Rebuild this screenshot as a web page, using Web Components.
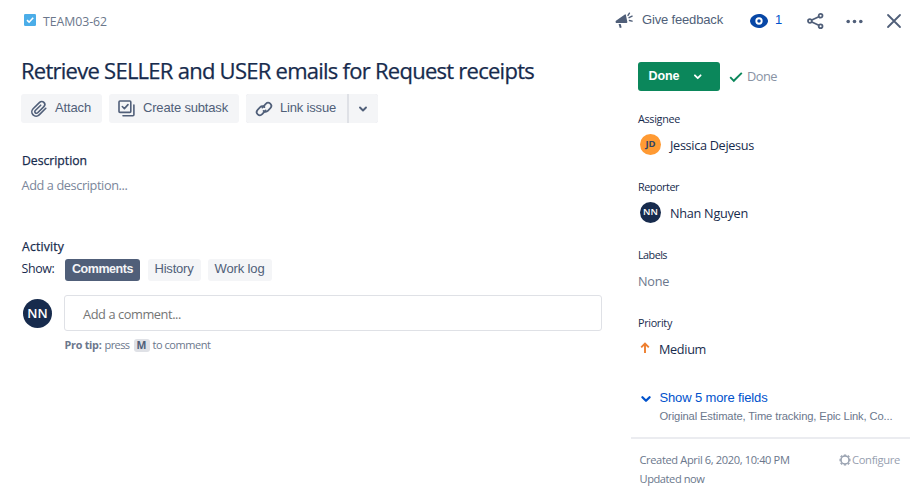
<!DOCTYPE html>
<html lang="en"><head><meta charset="utf-8"><title>TEAM03-62</title>
<style>
html,body{margin:0;background:#fff;overflow:hidden}
body{width:915px;height:500px}
</style></head><body>
<issue-page></issue-page>
<script>
function define(name, markup, setup){
  const t=document.createElement('template'); t.innerHTML=markup;
  customElements.define(name, class extends HTMLElement{
    connectedCallback(){
      if(this.shadowRoot) return;
      this.attachShadow({mode:'open'}).appendChild(t.content.cloneNode(true));
      if(setup) setup(this,this.shadowRoot);
    }
  });
}

/* Single line of text; "w" is the measure it is tracked to. */
define('ui-text',`<style>
:host{display:block;white-space:nowrap;flex:none;color:#172b4d;font-family:"Open Sans","Noto Sans",sans-serif;line-height:20px;height:20px}
:host([arial]){font-family:"Liberation Sans",Arial,sans-serif}
:host([bold]){font-weight:600}
:host([arial][bold]){font-weight:700}
:host([medium]){-webkit-text-stroke:.25px currentColor}
span{display:inline-block}
</style><span><slot></slot></span>`,(el,root)=>{
  const s=root.querySelector('span');
  el.style.fontSize=(el.getAttribute('size')||13)+'px';
  if(el.hasAttribute('color')) el.style.color=el.getAttribute('color');
  if(el.hasAttribute('weight')) el.style.fontWeight=el.getAttribute('weight');
  const w=+el.getAttribute('w');
  if(w){ s.style.letterSpacing=((w-s.getBoundingClientRect().width)/el.textContent.length)+'px'; el.style.width=w+'px'; }
});

const icons={
 task:['0 0 12 12','<rect width="12" height="12" rx="1.3" fill="#4bade8"/><path d="M3 6.2 5.1 8.2 9.2 3.8" fill="none" stroke="#fff" stroke-width="1.6"/>'],
 clip:['0 0 18 18','<path d="M15.8 8.3 9.2 14.9a4.3 4.3 0 0 1-6.1-6.1l6.5-6.4a3 3 0 0 1 4.3 4.2l-6.2 6.2a1.65 1.65 0 0 1-2.4-2.3l5.4-5.3" fill="none" stroke="currentColor" stroke-width="1.6" stroke-linecap="round"/>'],
 subtask:['0 0 17 17','<g fill="none" stroke="currentColor" stroke-width="1.6" stroke-linecap="round" stroke-linejoin="round"><rect x="1" y="1" width="11.8" height="11.4" rx="1"/><path d="M4.3 6.5 6.4 8.6 10 4.6M15.9 5v9.8q0 1-1 1H5"/></g>'],
 link:['0 0 18 18','<g fill="none" stroke="currentColor" stroke-width="1.7" stroke-linecap="round"><path d="M7.3 7.6 10.8 3.8a3.15 3.15 0 0 1 4.6 4.4l-2.6 2.7c-1.2 1.2-3.2 1.2-4.3 0"/><path d="M10.7 10.4 7.2 14.2a3.15 3.15 0 0 1-4.6-4.4L5.2 7.1c1.2-1.2 3.2-1.2 4.3 0"/></g>'],
 chevron:['0 0 10 10','<path d="M2 3.5 5 6.5 8 3.5" fill="none" stroke="currentColor" stroke-width="1.9" stroke-linecap="round" stroke-linejoin="round"/>'],
 horn:['0 0 20 18','<g fill="currentColor"><path d="M1 9.3 10.4 2.6Q11.3 2.2 11.5 3.2L13 10.6Q13 11.6 12 11.6L1.2 11.7Q-.2 10.6 1 9.3Z"/><path d="M3.8 12.6H6L7 16.2 5 16.8Z"/></g><path d="M13.7 3.6 15.2 1.2M14.8 6 18 4.4M15.2 8.9 18 9.6" stroke="currentColor" stroke-width="1.5" stroke-linecap="round"/>'],
 eye:['0 0 18 14','<path d="M9 0C3.6 0 0 4.2 0 7s3.6 7 9 7 9-4.2 9-7-3.6-7-9-7Z" fill="currentColor"/><circle cx="9" cy="7" r="2.7" fill="none" stroke="#fff" stroke-width="1.9"/>'],
 share:['0 0 17 16','<g fill="none" stroke="currentColor" stroke-width="1.8"><circle cx="2.9" cy="8" r="1.9"/><circle cx="13.6" cy="2.8" r="1.9"/><circle cx="13.6" cy="13.2" r="1.9"/><path d="M4.8 7 11.8 3.7M4.8 9 11.8 12.3"/></g>'],
 dots:['0 0 17 5','<g fill="currentColor"><circle cx="2.2" cy="2.5" r="1.8"/><circle cx="8.5" cy="2.5" r="1.8"/><circle cx="14.8" cy="2.5" r="1.8"/></g>'],
 close:['0 0 14 14','<path d="M1 1 13 13M13 1 1 13" stroke="currentColor" stroke-width="1.8" stroke-linecap="round"/>'],
 check:['0 0 14 10','<path d="M1.2 5.2 4.8 8.8 12.8 .9" fill="none" stroke="#0b875b" stroke-width="1.9"/>'],
 up:['0 0 10 12','<path d="M5 11V1.5M1.2 5.3 5 1.5 8.8 5.3" fill="none" stroke="#ee7f30" stroke-width="1.9"/>'],
 gear:['0 0 12 12','<circle cx="6" cy="6" r="4" fill="none" stroke="currentColor" stroke-width="1.5"/><path d="M6 .5v1.3M6 10.2v1.3M.5 6h1.3M10.2 6h1.3M1.9 1.9l.9.9M9.2 9.2l.9.9M10.1 1.9l-.9.9M2.8 9.2l-.9.9" stroke="currentColor" stroke-width="2.3"/>']
};
define('ui-icon',`<style>:host{display:block;flex:none;color:#505f79}svg{display:block;width:100%;height:100%;overflow:visible}</style><svg></svg>`,(el,root)=>{
  const [box,body]=icons[el.getAttribute('name')], v=box.split(' '), k=+(el.getAttribute('scale')||1), s=root.querySelector('svg');
  s.setAttribute('viewBox',box); s.innerHTML=body;
  el.style.width=v[2]*k+'px'; el.style.height=v[3]*k+'px';
  if(el.hasAttribute('color')) el.style.color=el.getAttribute('color');
});

define('ui-button',`<style>
:host{display:flex;box-sizing:border-box;align-items:center;height:29px;background:#f4f5f7;border-radius:3px;padding-left:9px;flex:none}
::slotted(ui-text){margin-top:-2px}
</style><slot></slot>`);

define('ui-tab',`<style>
:host{display:flex;justify-content:center;height:22px;background:#f4f5f7;border-radius:3px;flex:none}
:host([selected]){background:#505f79}
::slotted(ui-text){margin-left:-1px}
</style><slot></slot>`);

define('ui-avatar',`<style>
:host{display:flex;align-items:center;justify-content:center;border-radius:50%;background:#172b4d;color:#fff;font-family:"Open Sans","Noto Sans",sans-serif;font-weight:600;width:21px;height:21px;font-size:9.5px;line-height:1;flex:none}
:host([large]){width:29px;height:29px;font-size:13px}
:host([orange]){background:#ff9a33;color:#344563;font-weight:700}
</style><slot></slot>`);

define('field-row',`<style>
:host{display:block;height:68px}
.v{display:flex;align-items:center;height:24px;margin-top:4px;gap:9px}
:host([compact]) .v{padding-left:1px}
::slotted(ui-avatar){margin:-2px 0 0 1px}
</style><slot name="label"></slot><div class="v"><slot></slot></div>`);

define('issue-main',`<style>
:host{display:block;padding:12px 0 0 22px;box-sizing:border-box;width:602px}
.row{display:flex}
.crumb{gap:7px;padding-left:2px;align-items:flex-start}
.crumb ui-icon{margin-top:2px}
.title{margin:28px 0 0 -1px}
.actions{margin:14px 0 0 -1px;gap:7px}
.attach{width:81px;gap:7px}.sub{width:130px;gap:8px}.lk{width:101px;gap:7px;border-radius:3px 0 0 3px}
.split{display:flex;gap:2px;background:#dfe1e6;border-radius:3px}
.more{width:29px;padding-left:9px;border-radius:0 3px 3px 0}
.desc{margin-top:28px}.add{margin:4px 0 0 -.5px}.act{margin-top:42px}
.tabs{margin-top:2px;height:22px}
.tabs ui-tab{margin-right:8px}
.comment{margin-top:14px;height:36px;align-items:center;padding-left:1px}
.box{margin-left:12px;box-sizing:border-box;width:538px;height:36px;border:1px solid #dfe1e6;border-radius:3px;padding:8px 0 0 18px}
.tip{margin:4px 0 0 42.5px;align-items:center}
.key{margin:0 3px 0 4px;width:16px;height:13px;border-radius:3px;background:#dfe1e6;display:flex;align-items:center;justify-content:center}
</style>
<div class="row crumb"><ui-icon name="task"></ui-icon><ui-text size="12.3" w="64" color="#6b778c">TEAM03-62</ui-text></div>
<ui-text medium class="title" size="22" w="513">Retrieve SELLER and USER emails for Request receipts</ui-text>
<div class="row actions">
 <ui-button class="attach"><ui-icon name="clip"></ui-icon><ui-text arial size="13" w="36" color="#505f79">Attach</ui-text></ui-button>
 <ui-button class="sub"><ui-icon name="subtask"></ui-icon><ui-text arial size="13" w="85" color="#505f79">Create subtask</ui-text></ui-button>
 <div class="split"><ui-button class="lk"><ui-icon name="link"></ui-icon><ui-text arial size="13" w="56" color="#505f79">Link issue</ui-text></ui-button><ui-button class="more"><ui-icon name="chevron"></ui-icon></ui-button></div>
</div>
<ui-text medium class="desc" size="12.2" w="65">Description</ui-text>
<ui-text class="add" size="12.7" w="106" color="#7a869a">Add a description...</ui-text>
<ui-text medium class="act" size="12.2" w="42">Activity</ui-text>
<div class="row tabs"><ui-text style="margin-left:-.5px" size="12.4" w="33">Show:</ui-text>
 <ui-tab selected style="width:75px;margin-left:10.5px"><ui-text arial bold style="margin-left:0" size="12.5" w="61" color="#f4f5f7">Comments</ui-text></ui-tab>
 <ui-tab style="width:53px"><ui-text arial size="13" w="39" color="#505f79">History</ui-text></ui-tab>
 <ui-tab style="width:64px;margin-left:-1px"><ui-text arial size="13" w="50" color="#505f79">Work log</ui-text></ui-tab></div>
<div class="row comment"><ui-avatar large>NN</ui-avatar><div class="box"><ui-text size="12.8" w="98" color="#757575">Add a comment...</ui-text></div></div>
<div class="row tip"><ui-text size="10.8" w="37" weight="700" color="#6b778c">Pro tip:</ui-text><ui-text style="margin-left:3px" size="11" w="25" color="#6b778c">press</ui-text><div class="key"><ui-text size="10.5" weight="700" color="#505f79">M</ui-text></div><ui-text size="11" w="58" color="#6b778c">to comment</ui-text></div>`);

define('issue-side',`<style>
:host{display:block;width:313px;padding-top:10px}
.row{display:flex}
.top{height:20px;align-items:center;padding-left:13px}
.status{margin:32px 0 0 36px;align-items:center;height:29px}
.done{box-sizing:border-box;display:flex;align-items:center;width:82px;height:29px;border-radius:3px;background:#0b875b;padding-left:10.5px}
.fields{margin:18px 0 0 36px;height:272px}
.more{padding-left:37.5px;margin-top:7px;height:20px}
hr{border:0;margin:10px 5px 0 29px;height:2px;background:#ebecf0}
.foot{margin:11px 15px 0 37.5px}
.conf{margin-left:auto;align-items:center;gap:1px}
</style>
<div class="row top"><ui-icon name="horn" scale=".95" style="margin:1px 0 0 -.5px"></ui-icon><ui-text arial style="margin-left:8.5px" size="13" w="81" color="#505f79">Give feedback</ui-text>
<ui-icon name="eye" style="margin:2px 0 0 27px" color="#0747a6"></ui-icon><ui-text arial style="margin-left:7px" size="13" color="#0052cc">1</ui-text>
<ui-icon name="share" style="margin:1px 0 0 25px"></ui-icon><ui-icon name="dots" style="margin:2px 0 0 22px"></ui-icon><ui-icon name="close" style="margin:2px 0 0 24px"></ui-icon></div>
<div class="row status"><div class="done"><ui-text arial bold style="margin-top:-2px" size="12.5" w="31" color="#fff">Done</ui-text><ui-icon name="chevron" color="#fff" scale=".95" style="margin:1px 0 0 13.5px"></ui-icon></div>
<ui-icon name="check" style="margin-left:9px"></ui-icon><ui-text style="margin:-1px 0 0 4px" size="12.8" w="30" color="#8993a4">Done</ui-text></div>
<div class="fields">
<field-row compact><ui-text slot="label" size="10.8" w="42">Assignee</ui-text><ui-avatar orange>JD</ui-avatar><ui-text size="12.7" w="84">Jessica Dejesus</ui-text></field-row>
<field-row compact><ui-text slot="label" size="10.8" w="41">Reporter</ui-text><ui-avatar>NN</ui-avatar><ui-text size="12.7" w="78">Nhan Nguyen</ui-text></field-row>
<field-row><ui-text slot="label" size="10.8" w="29">Labels</ui-text><ui-text size="12.7" w="31" color="#6b778c">None</ui-text></field-row>
<field-row><ui-text slot="label" size="10.8" w="34">Priority</ui-text><ui-icon name="up" style="margin:-2px 0 0 2px"></ui-icon><ui-text size="12.7" w="47">Medium</ui-text></field-row>
</div>
<div class="row more"><ui-icon name="chevron" scale="1.2" color="#0052cc" style="margin-top:5px"></ui-icon><ui-text arial style="margin-left:8px" size="13" w="108" color="#0052cc">Show 5 more fields</ui-text></div>
<ui-text arial style="margin-left:57.5px;margin-top:-2px" size="11.2" w="233" color="#6b778c">Original Estimate, Time tracking, Epic Link, Co...</ui-text>
<hr style="margin-top:11px">
<div class="row foot"><ui-text size="11.1" w="150" color="#6b778c">Created April 6, 2020, 10:40 PM</ui-text><div class="row conf"><ui-icon name="gear" color="#97a0af"></ui-icon><ui-text size="11.2" w="48" color="#97a0af">Configure</ui-text></div></div>
<ui-text style="margin:-1px 0 0 37.5px" size="11.1" w="65" color="#6b778c">Updated now</ui-text>`);

define('issue-page',`<style>:host{display:flex;width:915px;height:500px;background:#fff}</style><issue-main></issue-main><issue-side></issue-side>`);
</script>
</body></html>
